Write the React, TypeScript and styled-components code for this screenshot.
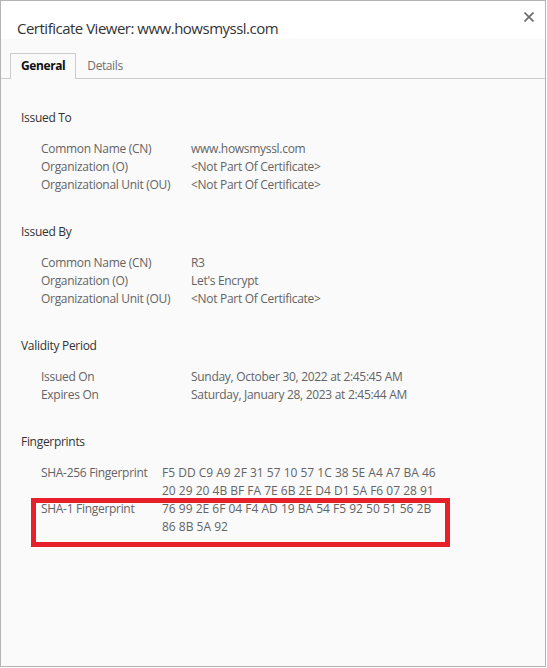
import styled, { createGlobalStyle } from 'styled-components'

const Global = createGlobalStyle`
  html, body {
    margin: 0;
    padding: 0;
    background: #ffffff;
  }
  body {
    font-family: "Open Sans", "Noto Sans", Arial, sans-serif;
  }
`

const Dialog = styled.div`
  box-sizing: border-box;
  width: 546px;
  height: 667px;
  border: 1px solid #b4b4b4;
  background: #fafafa;
  display: flex;
  flex-direction: column;
`

const TitleBar = styled.div`
  height: 38px;
  background: #ffffff;
  display: flex;
  justify-content: space-between;
  align-items: flex-start;
`

const Title = styled.h1`
  margin: 0;
  padding: 17px 0 0 16px;
  font-size: 15px;
  line-height: 20px;
  letter-spacing: -0.5px;
  font-weight: 400;
  color: #333333;
`

const CloseButton = styled.button`
  border: 0;
  background: none;
  padding: 0;
  margin: 11px 11px 0 0;
  width: 10px;
  height: 10px;
  display: flex;
  cursor: pointer;
`

const TabStrip = styled.div`
  display: flex;
  margin-top: 14px;
  padding-left: 9px;
  border-bottom: 1px solid #cccccc;
`

const Tab = styled.div<{ $active?: boolean }>`
  padding: 0 10px;
  height: 25px;
  line-height: 24px;
  margin-bottom: -1px;
  font-size: 12px;
  letter-spacing: -0.4px;
  border: 1px solid ${({ $active }) => ($active ? '#cccccc' : 'transparent')};
  border-bottom: 0;
  background: ${({ $active }) => ($active ? '#fafafa' : 'transparent')};
  color: ${({ $active }) => ($active ? '#111111' : '#707070')};
  font-weight: ${({ $active }) => ($active ? 700 : 400)};
`

const Body = styled.div`
  padding: 30px 20px 0;
`

const Section = styled.section`
  margin-bottom: 29px;
`

const Heading = styled.h2`
  margin: 0 0 13px;
  font-size: 12px;
  line-height: 18px;
  letter-spacing: -0.3px;
  font-weight: 400;
  color: #333333;
`

const Rows = styled.div`
  padding-left: 20px;
`

const Row = styled.div<{ $labelWidth: number }>`
  display: grid;
  grid-template-columns: ${({ $labelWidth }) => $labelWidth}px 1fr;
  font-size: 12px;
  line-height: 18px;
  letter-spacing: -0.3px;
  color: #646464;
`

const Value = styled.span<{ $hex?: boolean }>`
  letter-spacing: ${({ $hex }) => ($hex ? '0' : '-0.3px')};
`

const Highlight = styled.div`
  position: relative;

  &::after {
    content: '';
    position: absolute;
    left: -10px;
    top: -2px;
    width: 419px;
    height: 49px;
    box-sizing: border-box;
    border: 5px solid #e8202a;
    pointer-events: none;
  }
`

const Line = styled.span`
  display: block;
  white-space: nowrap;
`

type Field = { label: string; value: string[]; hex?: boolean }

const sections: { title: string; labelWidth: number; fields: Field[] }[] = [
  {
    title: 'Issued To',
    labelWidth: 150,
    fields: [
      { label: 'Common Name (CN)', value: ['www.howsmyssl.com'] },
      { label: 'Organization (O)', value: ['<Not Part Of Certificate>'] },
      { label: 'Organizational Unit (OU)', value: ['<Not Part Of Certificate>'] },
    ],
  },
  {
    title: 'Issued By',
    labelWidth: 150,
    fields: [
      { label: 'Common Name (CN)', value: ['R3'] },
      { label: 'Organization (O)', value: ["Let's Encrypt"] },
      { label: 'Organizational Unit (OU)', value: ['<Not Part Of Certificate>'] },
    ],
  },
  {
    title: 'Validity Period',
    labelWidth: 150,
    fields: [
      { label: 'Issued On', value: ['Sunday, October 30, 2022 at 2:45:45 AM'] },
      { label: 'Expires On', value: ['Saturday, January 28, 2023 at 2:45:44 AM'] },
    ],
  },
]

const sha256 = ['F5 DD C9 A9 2F 31 57 10 57 1C 38 5E A4 A7 BA 46', '20 29 20 4B BF FA 7E 6B 2E D4 D1 5A F6 07 28 91']
const sha1 = ['76 99 2E 6F 04 F4 AD 19 BA 54 F5 92 50 51 56 2B', '86 8B 5A 92']

function FieldRow({ field, labelWidth }: { field: Field; labelWidth: number }) {
  return (
    <Row $labelWidth={labelWidth}>
      <span>{field.label}</span>
      <Value $hex={field.hex}>
        {field.value.map((v) => (
          <Line key={v}>{v}</Line>
        ))}
      </Value>
    </Row>
  )
}

export default function App() {
  return (
    <>
      <Global />
      <Dialog>
        <TitleBar>
          <Title>Certificate Viewer: www.howsmyssl.com</Title>
          <CloseButton aria-label="Close">
            <svg width="10" height="10" viewBox="0 0 10 10">
              <path d="M0.5 0.5 L9.5 9.5 M9.5 0.5 L0.5 9.5" stroke="#6a6a6a" strokeWidth="1.6" />
            </svg>
          </CloseButton>
        </TitleBar>
        <TabStrip>
          <Tab $active>General</Tab>
          <Tab>Details</Tab>
        </TabStrip>
        <Body>
          {sections.map((s) => (
            <Section key={s.title}>
              <Heading>{s.title}</Heading>
              <Rows>
                {s.fields.map((f) => (
                  <FieldRow key={f.label} field={f} labelWidth={s.labelWidth} />
                ))}
              </Rows>
            </Section>
          ))}
          <Section>
            <Heading>Fingerprints</Heading>
            <Rows>
              <FieldRow field={{ label: 'SHA-256 Fingerprint', value: sha256, hex: true }} labelWidth={121} />
              <Highlight>
                <FieldRow field={{ label: 'SHA-1 Fingerprint', value: sha1, hex: true }} labelWidth={121} />
              </Highlight>
            </Rows>
          </Section>
        </Body>
      </Dialog>
    </>
  )
}
